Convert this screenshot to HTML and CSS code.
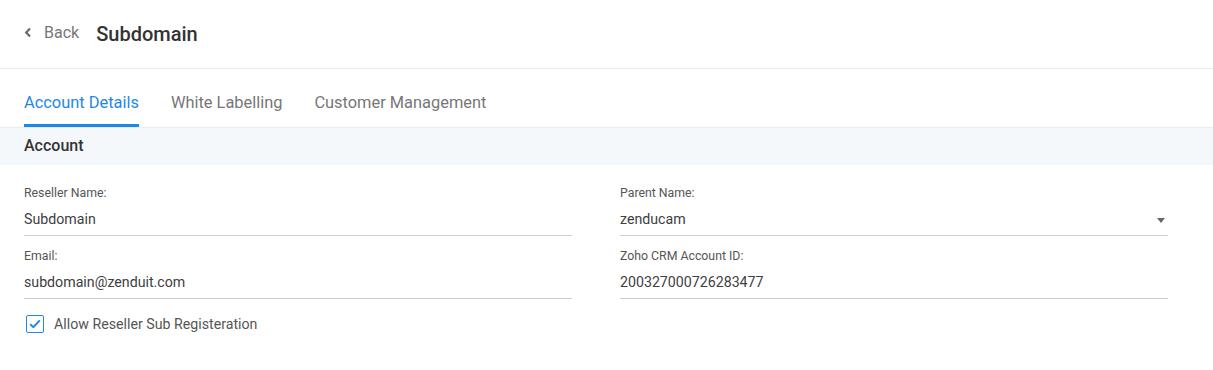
FILE: index.html
```html
<!DOCTYPE html>
<html lang="en">

<head>
  <meta charset="UTF-8">
  <title>Subdomain</title>
  <meta name="viewport" content="width=device-width, initial-scale=1.0">
  <link rel="stylesheet" href="styles.css">
</head>

<body>
  <div class="page-header">
    <a class="back-link" href="#">
      <svg class="back-icon" width="8" height="11" viewBox="0 0 8 11">
        <path d="M6 1.5 L2.2 5.5 L6 9.5" fill="none" stroke="#6b6b6b" stroke-width="2.2" />
      </svg>
      <span>Back</span>
    </a>
    <h1 class="page-title">Subdomain</h1>
  </div>

  <div class="tabs">
    <div class="tab active">Account Details</div>
    <div class="tab">White Labelling</div>
    <div class="tab">Customer Management</div>
  </div>

  <div class="section-bar">Account</div>

  <div class="form">
    <div class="field">
      <label>Reseller Name:</label>
      <div class="value">Subdomain</div>
    </div>
    <div class="field">
      <label>Parent Name:</label>
      <div class="value select">
        <span>zenducam</span>
        <span class="caret"></span>
      </div>
    </div>
    <div class="field">
      <label>Email:</label>
      <div class="value">subdomain@zenduit.com</div>
    </div>
    <div class="field">
      <label>Zoho CRM Account ID:</label>
      <div class="value">200327000726283477</div>
    </div>
  </div>

  <label class="check-row">
    <span class="checkbox">
      <svg width="12" height="10" viewBox="0 0 12 10">
        <path d="M1.2 5.2 L4.4 8.2 L10.8 1.4" fill="none" stroke="#1e88e5" stroke-width="2" />
      </svg>
    </span>
    Allow Reseller Sub Registeration
  </label>
</body>

</html>
```

FILE: styles.css
```css
* {
  box-sizing: border-box;
}

body {
  margin: 0;
  padding: 0;
  background: white;
  font-family: Roboto, 'Liberation Sans', sans-serif;
  color: #333;
}

.page-header {
  height: 69px;
  display: flex;
  align-items: center;
  padding-left: 24px;
  border-bottom: 1px solid #e9e9e9;
}

.back-link {
  display: flex;
  align-items: center;
  color: #777;
  text-decoration: none;
  font-size: 16px;
  margin-top: -3px;
}

.back-icon {
  margin-right: 12px;
}

.page-title {
  margin: 0 0 0 17px;
  font-size: 20px;
  font-weight: 500;
  color: #333;
}

.tabs {
  display: flex;
  gap: 32px;
  padding-left: 24px;
  border-bottom: 1px solid #e6ecf1;
}

.tab {
  font-size: 16.4px;
  line-height: 19px;
  padding: 24px 0 12px;
  color: #777;
  border-bottom: 3px solid transparent;
}

.tab.active {
  color: #1e88e5;
  border-bottom-color: #1e88e5;
}

.section-bar {
  background: #f4f8fb;
  height: 37px;
  line-height: 35px;
  padding-left: 24px;
  font-size: 16px;
  font-weight: 500;
  color: #333;
}

.form {
  display: grid;
  grid-template-columns: 1fr 1fr;
  column-gap: 48px;
  row-gap: 12px;
  padding: 20px 45px 0 24px;
}

.field label {
  display: block;
  font-size: 12.3px;
  line-height: 16px;
  color: #555;
  margin-bottom: 8px;
}

.value {
  font-size: 14.2px;
  line-height: 20px;
  padding-bottom: 6px;
  border-bottom: 1px solid #cfcfcf;
  color: #404040;
}

.select {
  display: flex;
  justify-content: space-between;
  align-items: center;
}

.caret {
  width: 0;
  height: 0;
  border-left: 4px solid transparent;
  border-right: 4px solid transparent;
  border-top: 5px solid #666;
  margin: 3px 3px 0 0;
}

.check-row {
  display: flex;
  align-items: center;
  gap: 10px;
  margin: 16px 0 0 26px;
  font-size: 14.2px;
  color: #555;
}

.checkbox {
  width: 18px;
  height: 18px;
  border: 1.5px solid #1e88e5;
  border-radius: 2px;
  display: flex;
  align-items: center;
  justify-content: center;
}
```
